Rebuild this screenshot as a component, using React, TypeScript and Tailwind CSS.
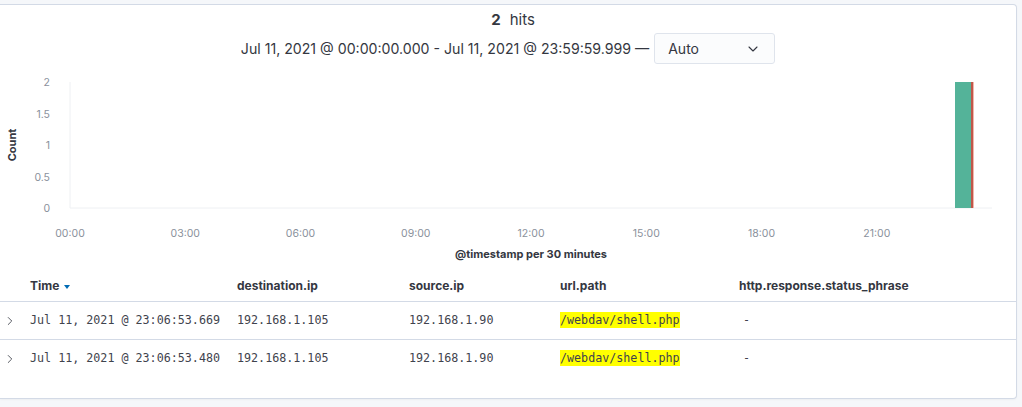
import React from 'react';
import { ChevronDown, ChevronRight } from 'lucide-react';

const rows = [
  { time: 'Jul 11, 2021 @ 23:06:53.669', dest: '192.168.1.105', src: '192.168.1.90', path: '/webdav/shell.php', status: '-' },
  { time: 'Jul 11, 2021 @ 23:06:53.480', dest: '192.168.1.105', src: '192.168.1.90', path: '/webdav/shell.php', status: '-' },
];

const xTicks = ['00:00', '03:00', '06:00', '09:00', '12:00', '15:00', '18:00', '21:00'];
const yTicks = [
  { label: '2', y: 18 },
  { label: '1.5', y: 49.5 },
  { label: '1', y: 81 },
  { label: '0.5', y: 112.5 },
  { label: '0', y: 144 },
];

// histogram drawn in svg, coords are relative to the chart top (page y = 64)
function Histogram() {
  const left = 70;
  const hour = 38.42;
  return (
    <svg width={1017} height={206} className="block" style={{ fontFamily: 'Inter, "Liberation Sans", sans-serif' }}>
      <line x1={left} y1={18} x2={left} y2={144} stroke="#eef0f3" />
      <line x1={left} y1={144} x2={992} y2={144} stroke="#eef0f3" />
      {yTicks.map((t) => (
        <text key={t.label} x={50} y={t.y + 4} textAnchor="end" fontSize={10.5} fill="#8a919c">
          {t.label}
        </text>
      ))}
      {xTicks.map((t, i) => (
        <text key={t} x={left + i * 3 * hour} y={173} textAnchor="middle" fontSize={10.5} fill="#8a919c">
          {t}
        </text>
      ))}
      <text
        x={0}
        y={0}
        transform="translate(16 81) rotate(-90)"
        textAnchor="middle"
        fontSize={11}
        fontWeight={700}
        fill="#343741"
      >
        Count
      </text>
      <text x={531} y={194} textAnchor="middle" fontSize={11} fontWeight={700} fill="#343741">
        @timestamp per 30 minutes
      </text>
      {/* 23:00 - 23:30 bucket */}
      <rect x={955} y={18} width={17} height={126} fill="#54b399" />
      <rect x={971} y={18} width={2} height={126} fill="#c0574a" />
      <rect x={973} y={18} width={1} height={126} fill="#f0b7ad" />
    </svg>
  );
}

export default function App() {
  return (
    <div className="min-h-screen bg-[#f5f7fa] pt-[4px] pr-[5px] pb-[8px]" style={{ fontFamily: 'Inter, "Liberation Sans", sans-serif' }}>
      <div className="h-[395px] bg-white border border-l-0 border-[#d3dae6] rounded-r-[4px] shadow-[0_1px_2px_rgba(0,0,0,0.04)] text-[#343741] overflow-hidden">
        {/* hits + time range */}
        <div className="flex flex-col items-center pt-[5px]">
          <div className="h-[20px] leading-[20px] text-[15px] pl-[10px]">
            <span className="font-bold">2</span>
            <span className="ml-[9px]">hits</span>
          </div>
          <div className="mt-[3px] flex items-center h-[31px] pl-[0px]">
            <span className="text-[14.15px]">Jul 11, 2021 @ 00:00:00.000 - Jul 11, 2021 @ 23:59:59.999 —</span>
            <div className="ml-[5px] w-[121px] h-[31px] border border-[#dfe4ec] rounded-[3px] bg-[#fbfcfd] flex items-center justify-between pl-[13px] pr-[13px]">
              <span className="text-[14px]">Auto</span>
              <ChevronDown size={16} strokeWidth={1.6} className="text-[#343741]" />
            </div>
          </div>
        </div>

        <Histogram />

        {/* document table */}
        <div className="grid grid-cols-[30px_207px_172px_151px_179px_1fr] h-[32px] items-center border-b border-[#d3dae6] text-[12px] font-bold">
          <div />
          <div className="flex items-center gap-[5px]">
            Time
            <span className="w-0 h-0 border-l-[3px] border-r-[3px] border-t-[4px] border-l-transparent border-r-transparent border-t-[#006bb4] mt-[2px]" />
          </div>
          <div>destination.ip</div>
          <div>source.ip</div>
          <div>url.path</div>
          <div>http.response.status_phrase</div>
        </div>
        {rows.map((r, i) => (
          <div
            key={i}
            className={`grid grid-cols-[30px_207px_172px_151px_179px_1fr] h-[38px] items-center text-[11.7px] text-[#3f434d] ${i === 0 ? 'border-b border-[#d3dae6]' : ''}`}
            style={{ fontFamily: '"DejaVu Sans Mono", "Liberation Mono", monospace' }}
          >
            <div className="pl-[3px] flex items-center">
              <ChevronRight size={14} strokeWidth={1.4} className="text-[#343741]" />
            </div>
            <div>{r.time}</div>
            <div>{r.dest}</div>
            <div>{r.src}</div>
            <div>
              <span className="bg-[#ffff00] leading-[16px] inline-block">{r.path}</span>
            </div>
            <div className="pl-[4px]">{r.status}</div>
          </div>
        ))}
      </div>
    </div>
  );
}
